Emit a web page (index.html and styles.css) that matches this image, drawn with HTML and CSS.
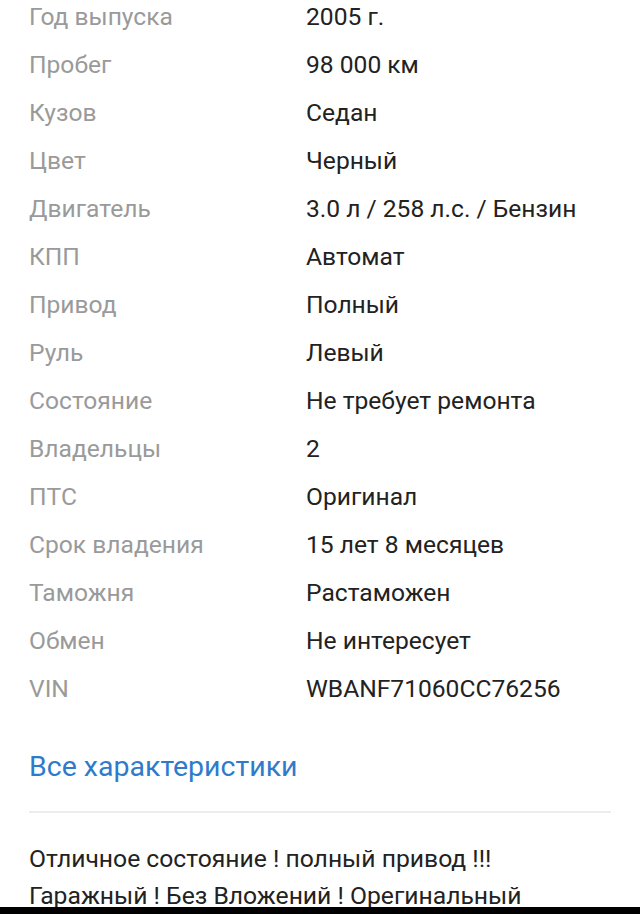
FILE: index.html
```html
<!DOCTYPE html>
<html lang="ru">
<head>
<meta charset="utf-8">
<link rel="stylesheet" href="styles.css">
</head>
<body>
<div class="page">
  <dl class="specs">
    <div class="row"><dt>Год выпуска</dt><dd>2005 г.</dd></div>
    <div class="row"><dt>Пробег</dt><dd>98 000 км</dd></div>
    <div class="row"><dt>Кузов</dt><dd>Седан</dd></div>
    <div class="row"><dt>Цвет</dt><dd>Черный</dd></div>
    <div class="row"><dt>Двигатель</dt><dd>3.0 л / 258 л.с. / Бензин</dd></div>
    <div class="row"><dt>КПП</dt><dd>Автомат</dd></div>
    <div class="row"><dt>Привод</dt><dd>Полный</dd></div>
    <div class="row"><dt>Руль</dt><dd>Левый</dd></div>
    <div class="row"><dt>Состояние</dt><dd>Не требует ремонта</dd></div>
    <div class="row"><dt>Владельцы</dt><dd>2</dd></div>
    <div class="row"><dt>ПТС</dt><dd>Оригинал</dd></div>
    <div class="row"><dt>Срок владения</dt><dd>15 лет 8 месяцев</dd></div>
    <div class="row"><dt>Таможня</dt><dd>Растаможен</dd></div>
    <div class="row"><dt>Обмен</dt><dd>Не интересует</dd></div>
    <div class="row"><dt>VIN</dt><dd>WBANF71060CC76256</dd></div>
  </dl>
  <a class="all-link" href="#">Все характеристики</a>
  <hr class="divider">
  <p class="description">Отличное состояние ! полный привод !!!<br>Гаражный ! Без Вложений ! Орегинальный</p>
</div>
<div class="navbar"></div>
</body>
</html>
```
FILE: styles.css
```css
html, body {
  margin: 0;
  padding: 0;
  background: #ffffff;
  height: 914px;
  overflow: hidden;
}
body {
  font-family: Roboto, "Noto Sans", sans-serif;
  position: relative;
}
.page {
  padding: 0 29px;
}
.specs {
  margin: -8px 0 0 0;
}
.row {
  display: flex;
  height: 48px;
  align-items: center;
  font-size: 24.6px;
}
.row dt {
  width: 277px;
  color: #9a9a9a;
}
.row dd {
  margin: 0;
  color: #222222;
}
.all-link {
  display: block;
  margin-top: 36px;
  font-size: 28.5px;
  line-height: 38px;
  color: #2f7bcb;
  text-decoration: none;
}
.divider {
  border: 0;
  border-top: 2px solid #ececec;
  margin: 25px 0 0 0;
}
.description {
  margin: 27px 0 0 0;
  font-size: 24.7px;
  line-height: 37px;
  color: #222222;
}
.navbar {
  position: absolute;
  left: 0;
  right: 0;
  bottom: 0;
  height: 7px;
  background: #000000;
}
```
